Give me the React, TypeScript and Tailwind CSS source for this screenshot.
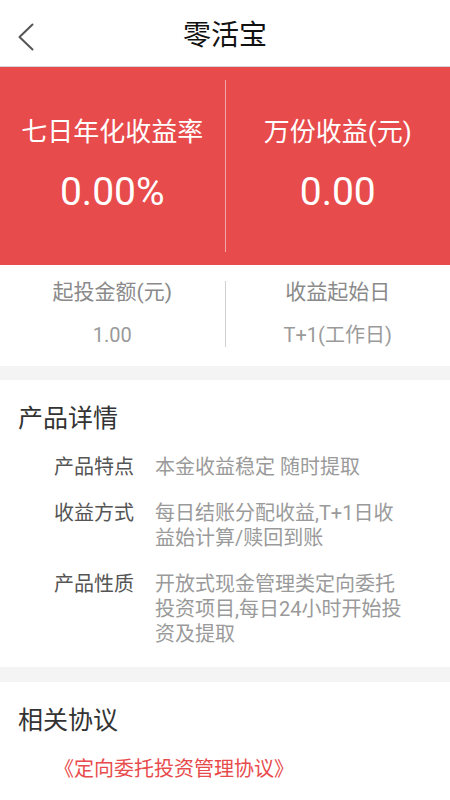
const FONT = 'font-["Roboto","Noto_Sans_CJK_SC",sans-serif]';

const DETAILS = [
  { label: '产品特点', value: '本金收益稳定 随时提取' },
  { label: '收益方式', value: '每日结账分配收益,T+1日收益始计算/赎回到账' },
  { label: '产品性质', value: '开放式现金管理类定向委托投资项目,每日24小时开始投资及提取' },
];

function Header() {
  return (
    <div className="relative flex h-[67px] items-center justify-center border-b border-[#d6d6d6] pt-[6px]">
      {/* Back chevron */}
      <svg
        className="absolute left-[17px] top-[23px]"
        width="18"
        height="28"
        viewBox="0 0 18 28"
        fill="none"
      >
        <polyline points="15.5,1.5 2.5,14 15.5,26.5" stroke="#555" strokeWidth="2" strokeLinecap="round" strokeLinejoin="round" />
      </svg>
      <span className="text-[28px] leading-[34px] text-[#111]">零活宝</span>
    </div>
  );
}

function Hero() {
  return (
    <div className="flex h-[198px] bg-[#e84b4c] text-white">
      <div className="flex flex-1 flex-col items-center pt-[50px]">
        <span className="text-[26px] leading-[30px]">七日年化收益率</span>
        <span className="mt-[22px] text-[39px] leading-[46px]">0.00%</span>
      </div>
      <div className="my-[13px] w-px bg-white/50" />
      <div className="flex flex-1 flex-col items-center pt-[50px]">
        <span className="text-[26px] leading-[30px]">万份收益(元)</span>
        <span className="mt-[22px] text-[39px] leading-[46px]">0.00</span>
      </div>
    </div>
  );
}

function Info() {
  return (
    <div className="flex h-[101px] bg-white">
      <div className="flex flex-1 flex-col items-center pt-[14px]">
        <span className="text-[21px] leading-[26px] text-[#8a8a8a]">起投金额(元)</span>
        <span className="mt-[18px] text-[20px] leading-[24px] text-[#9a9a9a]">1.00</span>
      </div>
      <div className="mt-[16px] mb-[19px] w-px bg-[#cfcfcf]" />
      <div className="flex flex-1 flex-col items-center pt-[14px]">
        <span className="text-[21px] leading-[26px] text-[#8a8a8a]">收益起始日</span>
        <span className="mt-[18px] text-[20px] leading-[24px] text-[#9a9a9a]">T+1(工作日)</span>
      </div>
    </div>
  );
}

export default function App() {
  return (
    <div className={`${FONT} min-h-screen w-[450px] bg-white`}>
      <Header />
      <Hero />
      <Info />

      <div className="h-[14px] bg-[#f4f4f4]" />

      {/* 产品详情 */}
      <div className="bg-white px-[18px] pt-[24px] pb-[20px]">
        <h2 className="text-[25px] leading-[30px] text-[#333]">产品详情</h2>
        <div className="mt-[21px] flex flex-col gap-[21px] pl-[36px]">
          {DETAILS.map((d) => (
            <div key={d.label} className="flex">
              <span className="w-[101px] shrink-0 text-[20px] leading-[25px] text-[#555]">{d.label}</span>
              <span className="w-[252px] text-[20px] leading-[25px] text-[#9a9a9a]">{d.value}</span>
            </div>
          ))}
        </div>
      </div>

      <div className="h-[15px] bg-[#f4f4f4]" />

      {/* 相关协议 */}
      <div className="bg-white px-[18px] pt-[24px] pb-[20px]">
        <h2 className="text-[25px] leading-[30px] text-[#333]">相关协议</h2>
        <p className="mt-[21px] pl-[36px] text-[20px] leading-[25px] text-[#e84b4c]">《定向委托投资管理协议》</p>
      </div>
    </div>
  );
}
